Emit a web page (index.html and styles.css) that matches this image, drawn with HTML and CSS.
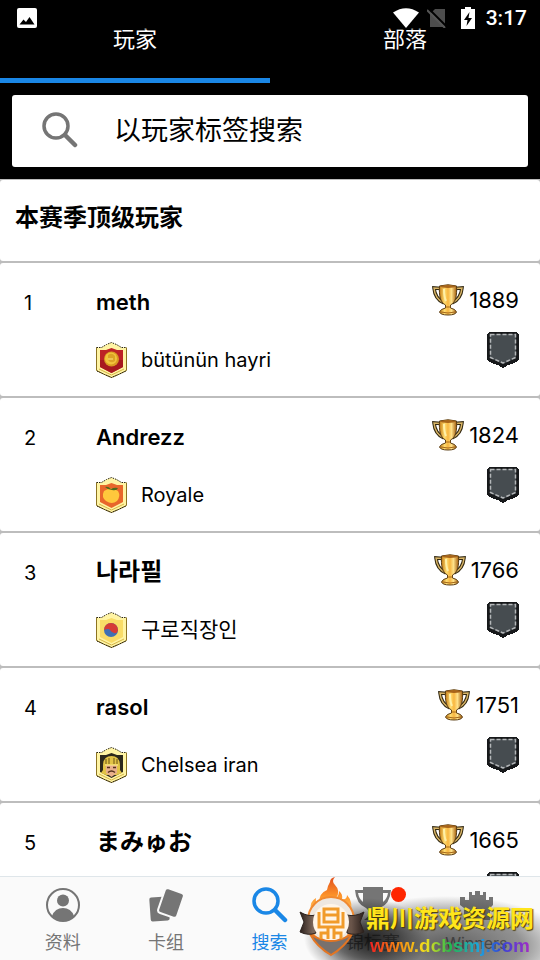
FILE: index.html
```html
<!DOCTYPE html>
<html lang="zh">
<head>
    <meta charset="UTF-8">
    <meta name="viewport" content="width=device-width, initial-scale=1.0">
    <title>搜索</title>
    <link rel="stylesheet" href="styles.css">
</head>
<body>
    <svg class="defs" aria-hidden="true">
        <defs>
            <linearGradient id="gold">
                <stop offset="0" stop-color="#c47a14"/>
                <stop offset=".3" stop-color="#ffdc70"/>
                <stop offset=".5" stop-color="#f8b640"/>
                <stop offset=".7" stop-color="#ffe28a"/>
                <stop offset="1" stop-color="#a45c0b"/>
            </linearGradient>
            <linearGradient id="flame" x2="0" y2="1">
                <stop offset="0" stop-color="#e2501c"/>
                <stop offset=".5" stop-color="#ff9a2c"/>
                <stop offset="1" stop-color="#ffd27a"/>
            </linearGradient>
            <linearGradient id="band">
                <stop offset="0" stop-color="#2b201c"/>
                <stop offset=".2" stop-color="#7b665a"/>
                <stop offset=".8" stop-color="#6a554a"/>
                <stop offset="1" stop-color="#2b201c"/>
            </linearGradient>
        </defs>
        <symbol id="trophy" viewBox="0 0 32 32">
            <path d="M9 4.500L2 4Q3 15 12 19M23 4.500L30 4Q29 15 20 19" fill="none" stroke="#30260f" stroke-width="3.500"/>
            <path d="M9 4.500L2 4Q3 15 12 19M23 4.500L30 4Q29 15 20 19" fill="none" stroke="#d9b566" stroke-width="1.500"/>
            <path d="M7.500 2Q16-.5 24.500 2C25 12 24 18 18.500 21v3q5 1 6 4-1 3-8.500 3T7.500 28q1-3 6-4v-3C8 18 7 12 7.500 2z" fill="url(#gold)" stroke="#5a3d14"/>
            <ellipse cx="16" cy="2.500" rx="7.500" ry="1.500" fill="#a8651a"/>
            <path d="M12 5q0 8 2 12" fill="none" stroke="#fff0a8" stroke-width="2"/>
            <path d="M13.500 23h5M9 28q7 2 14 0" fill="none" stroke="#a5681b"/>
        </symbol>
        <symbol id="pocket" viewBox="0 0 32 36">
            <path d="M2 0h28v1h1v1h1v26l-3 2-4 2-4 1-3 2-2 1-2-1-3-2-4-1-4-2-3-2V2h1V1h1z" fill="#17191b" shape-rendering="crispEdges"/>
            <path d="M3 2h26v24l-13 6-13-6z" fill="#464c50"/>
            <path d="M3.500 2.500h25v23L16 31 3.500 25.500z" fill="none" stroke="#b4b7b9" stroke-width="1.500" stroke-dasharray="4 2"/>
        </symbol>
        <symbol id="shield" viewBox="0 0 31 36">
            <path d="M15.500.5l5 2 5 3h5v23l-8 4-7 3-7-3-8-4v-23h5l5-3z" fill="#fff4a4"/>
            <path d="M.5 5.500v23l8 4 7 3 7-3 8-4v-23" fill="none" stroke="#8d7422"/>
            <path d="M.5 5.500h5l5-3 5-2 5 2 5 3h5M1 29l7.500 3.500 7 3 7-3L30 29" fill="none" stroke="#282313" stroke-dasharray="1.500 1"/>
            <path d="M3 27l12.500 6L28 27" fill="none" stroke="#d5b546"/>
        </symbol>
    </svg>

    <header class="header">
        <div class="status">
            <svg class="status-picture" viewBox="0 0 20 20" aria-hidden="true"><rect width="20" height="20" rx="2" fill="#fff"/><path d="M2.500 16.500l4-5 2.500 2.500 3.500-5 5 7.500z" fill="#000"/></svg>
            <svg class="status-wifi" viewBox="0 0 26 20" aria-hidden="true"><path d="M0 4.500Q13-4 26 4.500L13 20z" fill="#fff"/></svg>
            <svg class="status-sim" viewBox="0 0 20 20" aria-hidden="true"><path d="M8 1h10v18H3V6z" fill="#4d4d4d"/><path d="M1 0l19 19" stroke="#000" stroke-width="2"/><path d="M0 2l18 18" stroke="#565656" stroke-width="2"/></svg>
            <svg class="status-battery" viewBox="0 0 14 22" aria-hidden="true"><path d="M4 0h6v2h4v20H0V2h4z" fill="#fff"/><path d="M8.500 5L3 13h3.500L5.500 19 11 11H7.500z" fill="#000"/></svg>
            <span class="clock">3:17</span>
        </div>
        <div class="tabs">
            <button class="tab active">玩家</button>
            <button class="tab">部落</button>
        </div>
        <label class="search">
            <svg viewBox="0 0 36 36" aria-hidden="true"><circle cx="14" cy="14" r="12" fill="none" stroke="currentColor" stroke-width="3.500"/><path d="M23 23l10 10" stroke="currentColor" stroke-width="4.500" stroke-linecap="round"/></svg>
            <input type="text" placeholder="以玩家标签搜索" aria-label="以玩家标签搜索">
        </label>
    </header>

    <main class="content">
        <h1 class="title">本赛季顶级玩家</h1>
        <ol class="players">
            <li class="player">
                <span class="rank">1</span>
                <span class="name">meth</span>
                <span class="score"><svg viewBox="0 0 32 32"><use href="#trophy"/></svg>1889</span>
                <span class="clan">
                    <svg viewBox="0 0 31 36"><use href="#shield"/><path d="M4 8h6l5.500-2L21 8h6v17l-11.500 6L4 25z" fill="#bd2226"/><path d="M4 18h23v7l-11.500 6L4 25z" fill="#a7191f"/><circle cx="15.500" cy="17" r="7.500" fill="#d99a22"/><circle cx="15" cy="16.500" r="6" fill="#f2c43c"/><path d="M12 13q4-3 7 1v5q-4 3-7-1z" fill="#dca326"/><path d="M12 17h5" stroke="#ffe681"/></svg>
                    bütünün hayri
                </span>
                <svg class="pocket" viewBox="0 0 32 36"><use href="#pocket"/></svg>
            </li>
            <li class="player">
                <span class="rank">2</span>
                <span class="name">Andrezz</span>
                <span class="score"><svg viewBox="0 0 32 32"><use href="#trophy"/></svg>1824</span>
                <span class="clan">
                    <svg viewBox="0 0 31 36"><use href="#shield"/><path d="M4 8h6l5.500-2L21 8h6v17l-11.500 6L4 25z" fill="#e8662b"/><path d="M8 14q7-5 14 0 3 5-1 10-5 4-11 0-5-4-2-10z" fill="#ffc83c"/><path d="M9 10q3-1 6 2 3-2 7-1-1 3-6 2-4 0-7-3z" fill="#4d6b1d"/></svg>
                    Royale
                </span>
                <svg class="pocket" viewBox="0 0 32 36"><use href="#pocket"/></svg>
            </li>
            <li class="player">
                <span class="rank">3</span>
                <span class="name cjk">나라필</span>
                <span class="score"><svg viewBox="0 0 32 32"><use href="#trophy"/></svg>1766</span>
                <span class="clan cjk">
                    <svg viewBox="0 0 31 36"><use href="#shield"/><path d="M4 8h6l5.500-2L21 8h6v17l-11.500 6L4 25z" fill="#f9dc67"/><circle cx="15" cy="18" r="7" fill="#3f70b4"/><path d="M8 18a7 7 0 0 1 14 0q-1 4-4 3t-4-3-6 0z" fill="#d63a36"/></svg>
                    구로직장인
                </span>
                <svg class="pocket" viewBox="0 0 32 36"><use href="#pocket"/></svg>
            </li>
            <li class="player">
                <span class="rank">4</span>
                <span class="name">rasol</span>
                <span class="score"><svg viewBox="0 0 32 32"><use href="#trophy"/></svg>1751</span>
                <span class="clan">
                    <svg viewBox="0 0 31 36"><use href="#shield"/><path d="M4 8h6l5.500-2L21 8h6v17l-11.500 6L4 25z" fill="#2c281c"/><path d="M7 19q0-10 8.500-10T24 19v4l2 3-5 2H10l-5-2 2-3z" fill="#e2c346"/><path d="M10 18h11v8l-5.500 4-5.500-4z" fill="#e9b08b"/><path d="M10 12v5M13 11v6M18 11v6M21 12v5" stroke="#6b5415"/><path d="M9 18h13" stroke="#fff08d"/><path d="M11 20.500h3M17 20.500h3M12 25.500q3.500-3 7 0" fill="none" stroke="#54301c" stroke-width="1.500"/></svg>
                    Chelsea iran
                </span>
                <svg class="pocket" viewBox="0 0 32 36"><use href="#pocket"/></svg>
            </li>
            <li class="player">
                <span class="rank">5</span>
                <span class="name cjk">まみゅお</span>
                <span class="score"><svg viewBox="0 0 32 32"><use href="#trophy"/></svg>1665</span>
                <span class="clan"></span>
                <svg class="pocket" viewBox="0 0 32 36"><use href="#pocket"/></svg>
            </li>
        </ol>
    </main>

    <nav class="nav">
        <a href="#">
            <svg viewBox="0 0 36 36" aria-hidden="true"><circle cx="18" cy="18" r="16" fill="none" stroke="currentColor" stroke-width="2"/><circle cx="18" cy="13.500" r="6" fill="currentColor"/><path d="M7 29q3-8 11-8t11 8q-5 5-11 5T7 29z" fill="currentColor"/></svg>
            资料
        </a>
        <a href="#">
            <svg viewBox="0 0 36 36" aria-hidden="true"><rect x="2" y="10" width="19" height="24" rx="2" transform="rotate(-4 11 22)" fill="currentColor"/><rect x="13" y="3" width="20" height="26" rx="3" transform="rotate(19 23 16)" fill="currentColor" stroke="#fafafa" stroke-width="2"/></svg>
            卡组
        </a>
        <a href="#" class="active">
            <svg viewBox="0 0 36 36" aria-hidden="true"><circle cx="14" cy="14" r="12" fill="none" stroke="currentColor" stroke-width="3.500"/><path d="M23 23l10 10" stroke="currentColor" stroke-width="4.500" stroke-linecap="round"/></svg>
            搜索
        </a>
        <a href="#">
            <svg viewBox="0 0 36 36" aria-hidden="true"><path d="M8 0h20v3h8q-1 14-11 18-3 2-4 7l6 5H9l6-5q-1-5-4-7Q1 17 0 3h8zM3 6q1 6 5 9V6zm30 0h-5v9q4-3 5-9z" fill="currentColor" fill-rule="evenodd"/></svg>
            锦标赛
            <span class="dot"></span>
        </a>
        <a href="#">
            <svg viewBox="0 0 36 36" aria-hidden="true"><path d="M11 5h3v3h3V4h5v4h3V5h3v8h3v-3h4v8l-3 3v12H6V21l-4-3v-8h5v3h4z" fill="currentColor"/></svg>
            Winners
        </a>
        <div class="watermark">
            <svg viewBox="0 0 74 84" aria-hidden="true">
                <path d="M15 34q-2-8 5-12-1 6 3 5 0-10 8-13 1-5 3-8 0-4 5-5-4 4 0 8 6 6 1 13 3-2 3-7 4 3 3 8 5 1 5-4 7 7 3 21l-4 2q-12-13-32-3z" fill="url(#flame)"/>
                <circle cx="35" cy="44" r="23" fill="#eee7df" stroke="#f18a31" stroke-width="2"/>
                <path d="M14 58q7 13 21 21 14-8 21-21-21 14-42 0z" fill="#77716e" stroke="#e37522" stroke-width="2"/>
                <path d="M4 36q8 5 16 3v18q-8 3-16-1l4-10zM51 39q8 2 17-3l-4 10 4 10q-9 4-17 1z" fill="url(#band)" stroke="#2d231f"/>
                <circle cx="35" cy="46" r="18" fill="#fff5e8"/>
                <g fill="none" stroke="#f19b2a" stroke-width="3"><path d="M28 33h14v13H28zM28 39h14M23 36v15h24V36M32 51v12M38 51v12M25 63v-6h6M45 63v-6h-6"/></g>
            </svg>
            <div class="watermark-text">
                <strong>鼎川游戏资源网</strong>
                <span>www.dcbsmj.com</span>
            </div>
        </div>
    </nav>
</body>
</html>
```
FILE: styles.css
```css
* {
    box-sizing: border-box;
}
body {
    font-family: Inter, "Noto Sans CJK SC", "Noto Sans CJK KR", sans-serif;
    display: flex;
    flex-direction: column;
    height: 100vh;
    margin: 0;
    background: #fff;
    color: #000;
    overflow: hidden;
}
button, input {
    font-family: inherit;
}
svg {
    display: block;
    flex-shrink: 0;
}
.defs {
    position: absolute;
    width: 0;
    height: 0;
}
.header {
    position: relative;
    flex-shrink: 0;
    background: #000;
    padding-bottom: 12px;
}
/* status bar lies over the tabs */
.status {
    position: absolute;
    top: 0;
    left: 0;
    right: 0;
    height: 30px;
    display: flex;
    align-items: center;
    padding: 6px 13px 0 17px;
    background: rgba(0, 0, 0, 0.4);
    color: #fff;
}
.status-picture {
    width: 20px;
    height: 20px;
    margin-right: auto;
}
.status-wifi {
    width: 26px;
    height: 20px;
}
.status-sim {
    width: 20px;
    height: 20px;
    margin: 0 14px 0 8px;
}
.status-battery {
    width: 14px;
    height: 22px;
}
.clock {
    margin-left: 11px;
    font: 500 21px/24px Roboto, sans-serif;
}
.tabs {
    display: flex;
}
.tab {
    flex: 1;
    height: 83px;
    padding: 0 0 4px;
    border: none;
    border-bottom: 5px solid transparent;
    background: none;
    color: #fff;
    font-size: 22px;
}
.tab.active {
    border-image: linear-gradient(#1a87e6, #1a87e6) 1;
}
.search {
    display: flex;
    align-items: center;
    gap: 36px;
    height: 72px;
    margin: 12px 12px 0;
    padding: 0 30px 2px;
    border-radius: 3px;
    background: #fff;
    color: #757575;
}
.search svg {
    width: 36px;
    height: 36px;
}
.search input {
    flex: 1;
    min-width: 0;
    padding: 0;
    border: none;
    outline: none;
    font-size: 27px;
}
.search input::placeholder {
    color: #000;
}
.content {
    flex: 1;
    min-height: 0;
    overflow: hidden;
    background: #bdbdbd;
}
.title {
    height: 81px;
    margin: 1px 0 2px;
    padding: 20px 15px;
    border-radius: 3px;
    background: #fff;
    font-size: 24px;
    line-height: 36px;
}
.players {
    display: flex;
    flex-direction: column;
    gap: 2px;
    margin: 0;
    padding: 0;
    list-style: none;
}
.player {
    display: grid;
    grid-template-columns: 72px 1fr auto;
    grid-template-rows: 40px 36px;
    row-gap: 20px;
    height: 133px;
    padding: 19px 21px 0 24px;
    border-radius: 3px;
    background: #fff;
}
.rank, .name, .score, .clan {
    display: flex;
    align-items: center;
}
.rank {
    padding-top: 2px;
    font-size: 20px;
}
.name {
    font-size: 22px;
    font-weight: 600;
}
.name.cjk {
    padding-bottom: 6px;
    font-size: 24px;
}
.score {
    gap: 5px;
    height: 36px;
    font-size: 22px;
}
.score svg {
    width: 32px;
    height: 32px;
}
.clan {
    grid-column: 2;
    gap: 14px;
    font-size: 20px;
    line-height: 36px;
}
.clan.cjk {
    font-size: 21px;
}
.clan svg {
    width: 31px;
    height: 36px;
}
.pocket {
    width: 32px;
    height: 36px;
    margin-top: -10px;
    justify-self: end;
}
.nav {
    position: relative;
    flex-shrink: 0;
    display: flex;
    height: 84px;
    padding: 10px 12px 0 11px;
    border-top: 1px solid #dfe6ea;
    background: #fafafa;
}
.nav a {
    position: relative;
    flex: 1;
    display: flex;
    flex-direction: column;
    align-items: center;
    gap: 7px;
    color: #757575;
    font-size: 18px;
    line-height: 26px;
    text-decoration: none;
    white-space: nowrap;
}
.nav a svg {
    width: 36px;
    height: 36px;
}
.nav a.active {
    color: #1a87e6;
}
.nav a:nth-child(5) {
    font-size: 16px;
}
.dot {
    position: absolute;
    top: 0;
    left: 70px;
    width: 15px;
    height: 15px;
    border-radius: 50%;
    background: #ff2600;
}
.watermark {
    position: absolute;
    right: 0;
    bottom: 0;
    display: flex;
    width: 244px;
    height: 84px;
    background:
        radial-gradient(ellipse 62px 40px at 70px 62px, rgba(0, 0, 0, 0.8), rgba(0, 0, 0, 0.5) 50%, transparent),
        radial-gradient(ellipse 125px 50px at 150px 70px, rgba(30, 30, 30, 0.7), rgba(60, 60, 60, 0.55) 60%, transparent);
}
.watermark svg {
    width: 74px;
    height: 84px;
}
.watermark-text {
    display: flex;
    flex-direction: column;
    align-items: center;
    padding-top: 28px;
    margin-left: -4px;
}
.watermark strong {
    color: #ffe51c;
    font-size: 24px;
    line-height: 30px;
    white-space: nowrap;
    text-shadow: 1px 1px 1px #4a3a00;
}
.watermark span {
    font: bold 19px/24px "Liberation Sans", sans-serif;
    color: transparent;
    background: linear-gradient(90deg, #ee2222, #f58a12 18%, #f3e21b 35%, #24b94d 50%, #1da5dc 68%, #3444d6 82%, #a52bc4);
    -webkit-background-clip: text;
    background-clip: text;
}
```
